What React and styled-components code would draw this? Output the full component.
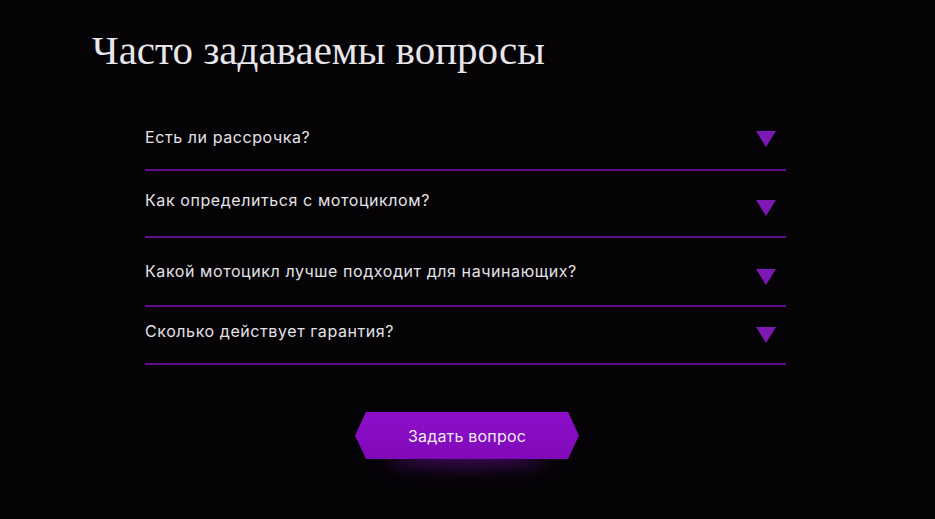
import React from 'react'
import styled, { createGlobalStyle } from 'styled-components'

const GlobalStyle = createGlobalStyle`
  html, body {
    margin: 0;
    padding: 0;
    background: #050306;
  }
  body {
    font-family: 'Inter', 'Noto Sans', sans-serif;
  }
`

const Section = styled.section`
  width: 935px;
  height: 519px;
  box-sizing: border-box;
  padding: 26px 0 0 92px;
  background: #050306;
  display: flex;
  flex-direction: column;
`

const Title = styled.h2`
  margin: 0;
  font-family: 'Liberation Serif', 'DejaVu Serif', serif;
  font-weight: 400;
  font-size: 41px;
  line-height: 48px;
  color: #e8e6ea;
`

const List = styled.div`
  width: 641px;
  margin: 40px 0 0 53px;
  display: flex;
  flex-direction: column;
`

const Row = styled.div`
  height: ${p => p.$h}px;
  border-bottom: 2px solid #5d0f8c;
  display: flex;
  justify-content: space-between;
  align-items: flex-start;
`

const Question = styled.span`
  margin-top: ${p => p.$top}px;
  font-size: 16px;
  line-height: 20px;
  letter-spacing: 0.58px;
  color: #e4e2e6;
`

const Arrow = styled.span`
  margin: ${p => p.$top}px 10px 0 0;
  width: 0;
  height: 0;
  border-left: 10.5px solid transparent;
  border-right: 10.5px solid transparent;
  border-top: 16px solid #7c19b4;
`

const ButtonWrap = styled.div`
  margin: 47px 0 0 263px;
  width: 224px;
  position: relative;
  &::after {
    content: '';
    position: absolute;
    left: 30px;
    right: 30px;
    bottom: -6px;
    height: 14px;
    border-radius: 50%;
    background: rgba(140, 20, 200, 0.55);
    filter: blur(9px);
    z-index: 0;
  }
`

const AskButton = styled.button`
  position: relative;
  z-index: 1;
  width: 224px;
  height: 47px;
  border: none;
  cursor: pointer;
  clip-path: polygon(11px 0, calc(100% - 11px) 0, 100% 50%, calc(100% - 11px) 100%, 11px 100%, 0 50%);
  background: linear-gradient(180deg, #8e0fcb 0%, #8009b8 100%);
  font-family: 'Inter', 'Noto Sans', sans-serif;
  font-size: 16px;
  letter-spacing: 0.2px;
  color: #f2eaf6;
`

const questions = [
  { text: 'Есть ли рассрочка?', h: 55, top: 13, arrow: 17 },
  { text: 'Как определиться с мотоциклом?', h: 65, top: 19, arrow: 29 },
  { text: 'Какой мотоцикл лучше подходит для начинающих?', h: 67, top: 23, arrow: 31 },
  { text: 'Сколько действует гарантия?', h: 56, top: 14, arrow: 20 },
]

export default function App() {
  return (
    <>
      <GlobalStyle />
      <Section>
        <Title>Часто задаваемы вопросы</Title>
        <List>
          {questions.map(q => (
            <Row key={q.text} $h={q.h}>
              <Question $top={q.top}>{q.text}</Question>
              <Arrow $top={q.arrow} />
            </Row>
          ))}
        </List>
        <ButtonWrap>
          <AskButton>Задать вопрос</AskButton>
        </ButtonWrap>
      </Section>
    </>
  )
}
